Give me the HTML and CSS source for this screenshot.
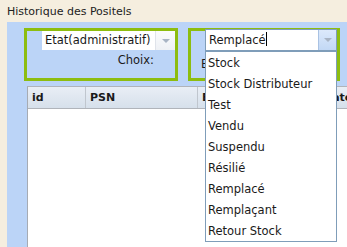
FILE: index.html
```html
<!DOCTYPE html>
<html lang="fr">
<head>
  <meta charset="UTF-8" />
  <title>Historique des Positels</title>
  <link rel="stylesheet" href="styles.css">
</head>
<body>
  <div class="page-title">Historique des Positels</div>

  <div class="panel">
    <!-- Filtres -->
    <div class="filters">
      <div class="filter-box">
        <div class="combo">
          <span class="combo-text">Etat(administratif)</span>
          <span class="combo-btn"><span class="arrow"></span></span>
        </div>
        <div class="filter-label">Choix:</div>
      </div>
      <div class="filter-box second">
        <div class="filter-label left">Etat:</div>
        <div class="combo open">
          <span class="combo-text">Remplacé<span class="caret"></span></span>
          <span class="combo-btn"><span class="arrow"></span></span>
        </div>
        <ul class="combo-list">
          <li>Stock</li>
          <li>Stock Distributeur</li>
          <li>Test</li>
          <li>Vendu</li>
          <li>Suspendu</li>
          <li>Résilié</li>
          <li>Remplacé</li>
          <li>Remplaçant</li>
          <li>Retour Stock</li>
        </ul>
      </div>
    </div>

    <!-- Grille -->
    <div class="grid">
      <div class="grid-head">
        <div class="col col-id">id</div>
        <div class="col col-psn">PSN</div>
        <div class="col col-etat">Etat</div>
        <div class="col col-date">Date</div>
      </div>
      <div class="grid-body"></div>
    </div>
  </div>
</body>
</html>
```

FILE: styles.css
```css
body {
  margin: 0;
  background: #f5eedf;
  font-family: "DejaVu Sans", Verdana, sans-serif;
  font-size: 11px;
  color: #1a1a1a;
  overflow: hidden;
}

.page-title {
  height: 22px;
  line-height: 24px;
  padding-left: 7px;
  font-size: 11px;
  color: #222;
}

.panel {
  margin-left: 7px;
  height: 225px;
  background: #bbd4f7;
  padding-top: 6px;
  padding-left: 17px;
  overflow: hidden;
}

.filters {
  display: flex;
  gap: 10px;
  position: relative;
}

.filter-box {
  width: 148px;
  height: 47px;
  border: 3px solid #8dbd0f;
  position: relative;
  flex: none;
}

.filter-box.second {
  width: 146px;
}

.combo {
  display: flex;
  margin-left: 15px;
  width: 133px;
  height: 19px;
  background: #fff;
}

.combo-text {
  flex: 1;
  line-height: 19px;
  padding-left: 3px;
  font-size: 11.5px;
}

.combo-btn {
  width: 19px;
  height: 19px;
  background: linear-gradient(#fafbfd, #eef1f5);
  border-left: 1px solid #dfe3ea;
  display: flex;
  align-items: center;
  justify-content: center;
}

.arrow {
  width: 0;
  height: 0;
  border-left: 4px solid transparent;
  border-right: 4px solid transparent;
  border-top: 4px solid #a8b4c4;
}

.filter-label {
  text-align: right;
  padding-right: 21px;
  margin-top: 3px;
  font-size: 11.5px;
  line-height: 14px;
}

.filter-label.left {
  text-align: left;
  position: absolute;
  left: 10px;
  top: 23px;
}

.combo.open {
  position: absolute;
  left: 14px;
  top: -2px;
  width: 130px;
  height: 20px;
  border: 1px solid #7f9db9;
  margin: 0;
}

.combo.open .combo-text {
  line-height: 20px;
}

.combo.open .combo-btn {
  height: 20px;
  width: 17px;
  border-left: 1px solid #a9c2e3;
  background: linear-gradient(#dce9fb, #c2d8f5);
}

.caret {
  display: inline-block;
  width: 1px;
  height: 14px;
  background: #000;
  vertical-align: -2px;
}

.combo-list {
  position: absolute;
  left: 14px;
  top: 20px;
  width: 130px;
  margin: 0;
  padding: 0;
  list-style: none;
  background: #fff;
  border: 1px solid #7f9db9;
  z-index: 2;
}

.combo-list li {
  height: 21px;
  line-height: 22px;
  padding-left: 2px;
  font-size: 11.5px;
}

.grid {
  margin-top: 5px;
  margin-left: 3px;
  height: 170px;
  width: 400px;
  background: #fff;
  border-left: 1px solid #a6abb3;
  border-top: 1px solid #b0b4ba;
}

.grid-head {
  display: flex;
  height: 21px;
  background: linear-gradient(#e9eef5, #d6e0eb);
  border-bottom: 1px solid #b0b4ba;
}

.col {
  font-weight: bold;
  font-size: 11px;
  line-height: 22px;
  padding-left: 4px;
  border-right: 1px solid #c0c6ce;
  box-sizing: border-box;
  flex: none;
}

.col-id { width: 58px; }
.col-psn { width: 112px; }
.col-etat { width: 121px; }
.col-date { width: 60px; }
```
